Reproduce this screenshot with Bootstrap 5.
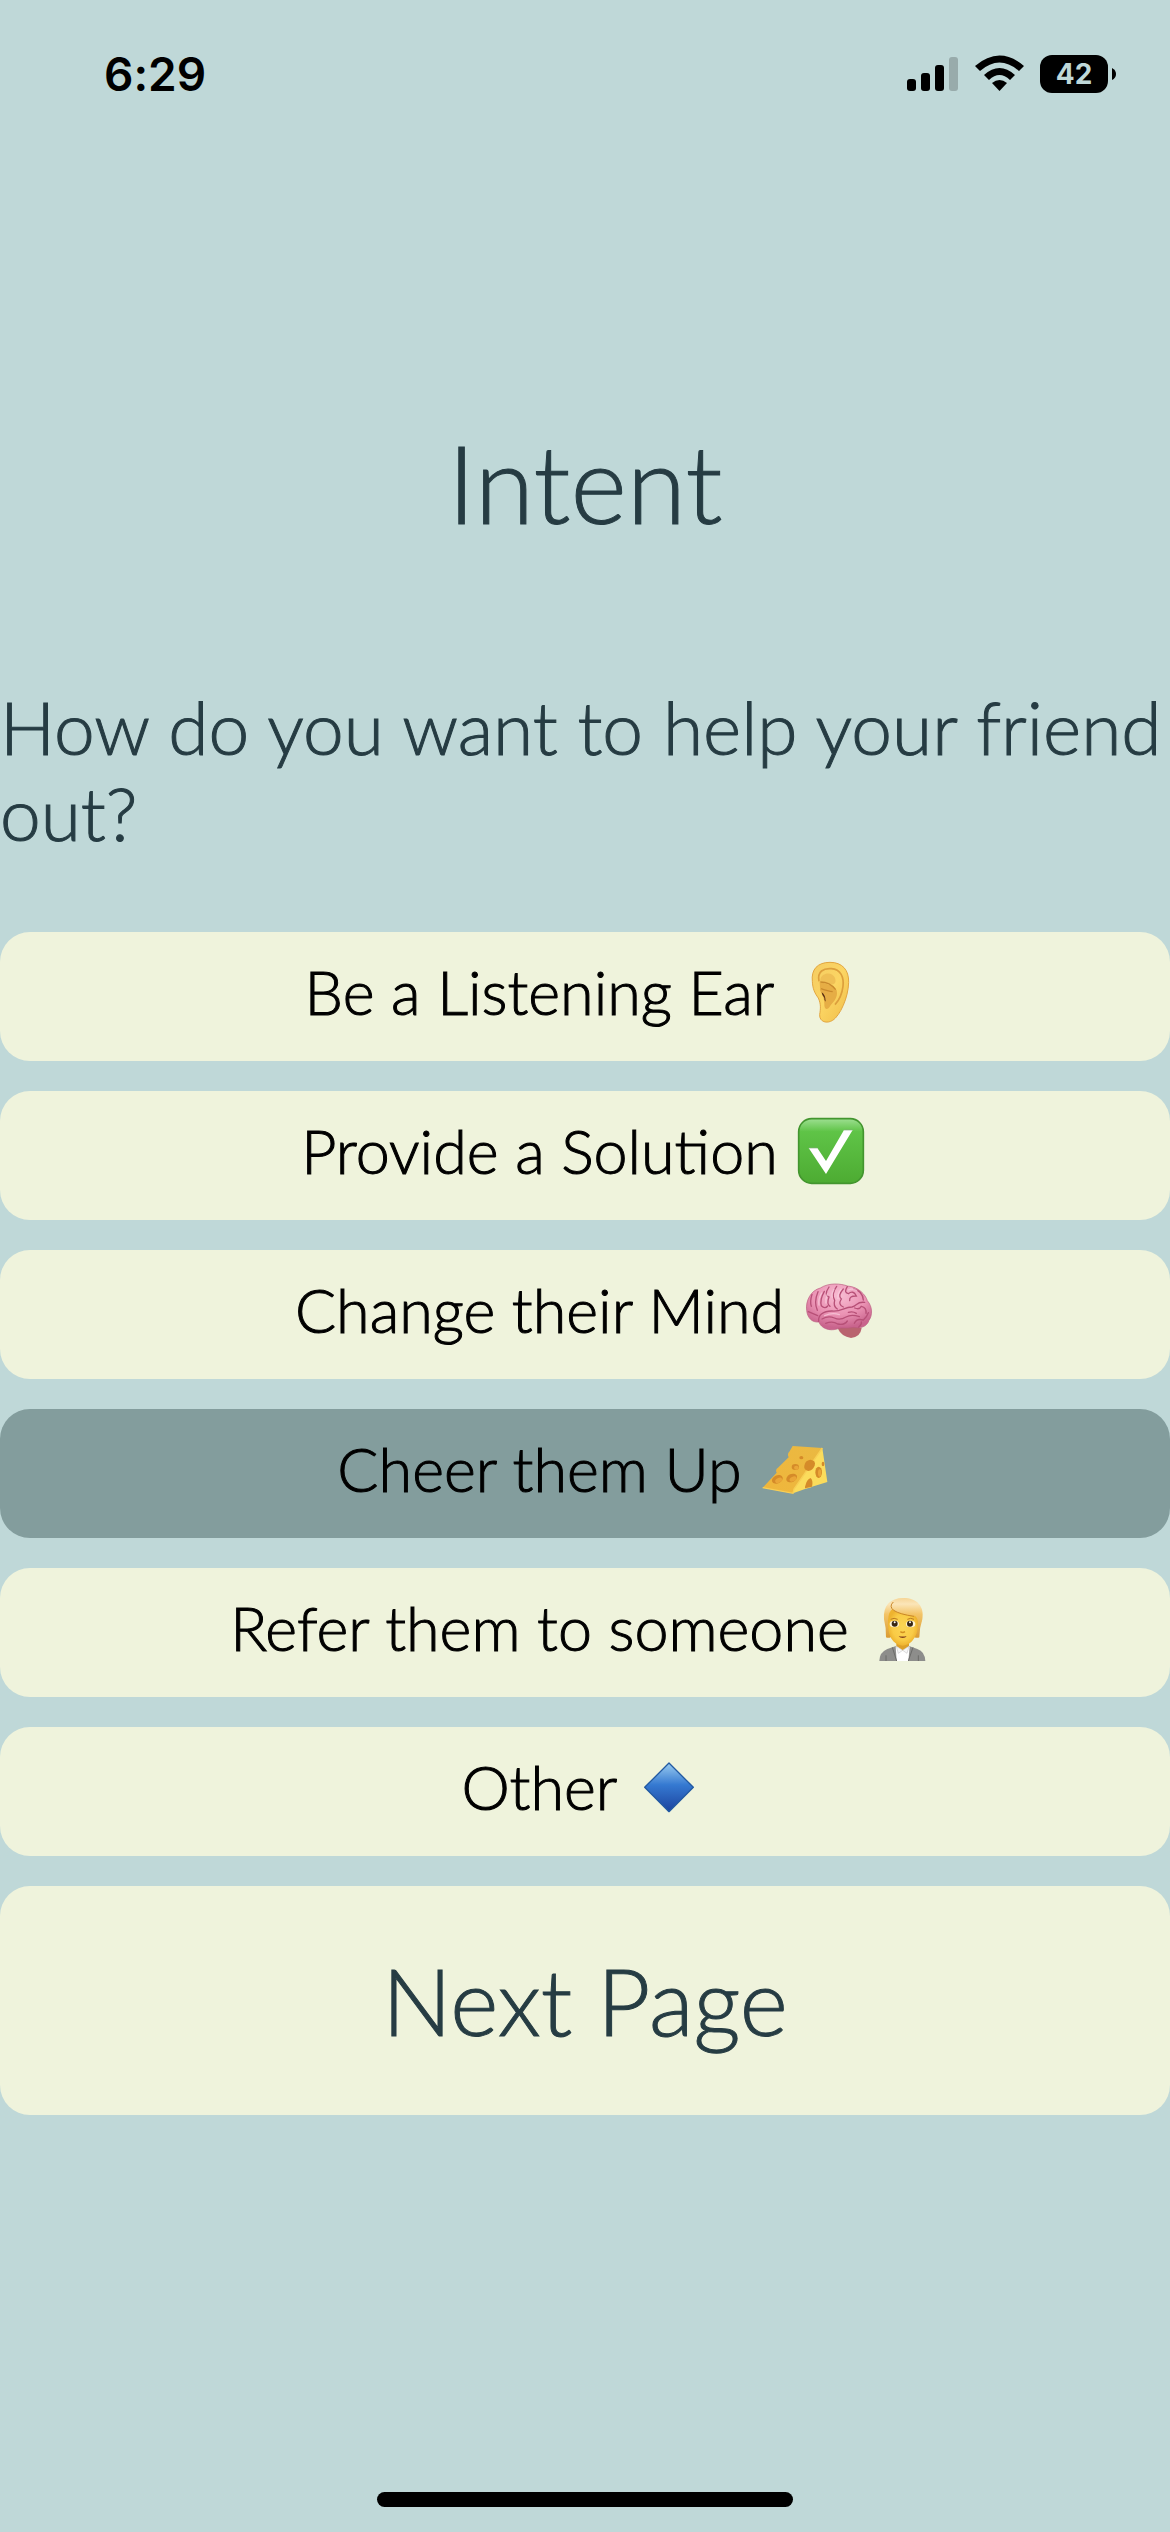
<!DOCTYPE html>
<html lang="en">
<head>
<meta charset="utf-8">
<meta name="viewport" content="width=device-width, initial-scale=1">
<title>Intent</title>
<link href="https://cdn.jsdelivr.net/npm/bootstrap@5.3.0/dist/css/bootstrap.min.css" rel="stylesheet">
<style>
body { background: #bfd8d8; color: #263c43; font-family: Lato, "Open Sans", sans-serif; font-weight: 300; font-variant-ligatures: none; }
main { -webkit-text-stroke: 1px currentColor; }
.status-bar { height: 148px; padding: 0 54px 0 104px; font-family: Inter, sans-serif; color: #000; }
.clock { font-size: 46px; line-height: 56px; font-weight: 600; }
.battery { width: 68px; height: 38px; border-radius: 12px; background: #000; color: #bfd8d8; font-size: 28px; line-height: 38px; font-weight: 700; }
.screen-title { font-size: 108px; line-height: 126px; font-weight: 300; margin: 271px 0 139px; }
.question { font-size: 73px; line-height: 86px; font-weight: 300; margin-bottom: 76px; }
.choices { gap: 30px; }
.choice, .choice:hover { background: #eff3dc; color: #000; border: 0; border-radius: 30px; padding: 22px 0 32px; font-size: 61px; line-height: 75px; font-weight: 300; gap: 16px; }
.choice.active { background: #839d9d; color: #000; }
.emoji { width: 75px; height: 75px; flex: none; }
.next, .next:hover { background: #eff3dc; color: #263c43; border: 0; border-radius: 30px; padding: 60px 0; font-size: 92px; line-height: 109px; font-weight: 300; }
.home-bar { width: 416px; height: 15px; border-radius: 8px; background: #000; margin-bottom: 25px; }
</style>
</head>
<body>
<div class="d-flex flex-column min-vh-100">
  <header class="status-bar d-flex justify-content-between align-items-center">
    <span class="clock">6:29</span>
    <div class="d-flex align-items-center">
      <svg width="52" height="38" viewBox="0 0 52 38" aria-hidden="true"><rect y="24" width="9" height="12" rx="3"/><rect x="14" y="18" width="9" height="18" rx="3"/><rect x="28" y="10" width="9" height="26" rx="3"/><rect x="42" y="2" width="9" height="34" rx="3" fill="#98abab"/></svg>
      <svg class="mx-3" width="49" height="38" viewBox="0 0 49 38" aria-hidden="true"><path d="M0 11Q24.500-10 49 11L44 16Q24.500-1 5 16Z"/><path d="M9 20Q24.500 6 40 20L35 25Q24.500 15 14 25Z"/><path d="M17 28Q24.500 22 32 28L24.500 36Z"/></svg>
      <span class="battery text-center">42</span>
      <svg class="ms-1" width="4" height="12" viewBox="0 0 4 12" aria-hidden="true"><path d="M0 0Q4 2 4 6Q4 10 0 12Z"/></svg>
    </div>
  </header>

  <main>
    <h1 class="screen-title text-center">Intent</h1>
    <p class="question">How do you want to help your friend out?</p>
    <div class="choices d-flex flex-column">
      <button type="button" class="choice btn d-flex justify-content-center">Be a Listening Ear
        <svg class="emoji" viewBox="21 42 225 225" aria-hidden="true">
          <defs><linearGradient id="earSkin" x2="1" y2="1"><stop offset="0" stop-color="#f5cc62"/><stop offset=".5" stop-color="#fbd563"/><stop offset="1" stop-color="#f0bd49"/></linearGradient></defs>
          <path d="M88 124C84 88 104 67 141 67C178 67 198 90 197 127C196 173 171 227 149 241C132 252 109 246 110 224C113 205 114 192 106 174C94 158 89 145 88 124Z" fill="url(#earSkin)" stroke="#e2a640" stroke-width="3"/>
          <path d="M108 124C102 94 122 84 145 86C174 88 183 112 180 139C177 163 168 181 156 194" fill="none" stroke="#dc9f3c" stroke-width="5"/>
          <path d="M110 125C127 132 151 133 161 151C167 177 147 187 139 202C132 211 123 207 124 191C124 166 108 154 111 145Z" fill="#e6ad45"/>
          <path d="M112 119C115 97 147 94 155 112C162 128 154 137 142 132Q128 126 110 128Z" fill="#efbf55"/>
          <path d="M112 126Q141 126 158 149M114 146Q136 154 149 155" fill="none" stroke="#c98a2e" stroke-width="4"/>
          <path d="M116 157Q128 165 128 185Q123 183 124 173Q117 167 116 157Z" fill="#552b12"/>
        </svg>
      </button>
      <button type="button" class="choice btn d-flex justify-content-center">Provide a Solution
        <svg class="emoji" viewBox="21 39 225 225" aria-hidden="true">
          <defs><linearGradient id="tick" x2="0" y2="1"><stop offset="0" stop-color="#9ddf91"/><stop offset=".2" stop-color="#5fc447"/><stop offset="1" stop-color="#4dab32"/></linearGradient></defs>
          <rect x="35" y="56" width="194" height="194" rx="39" fill="url(#tick)" stroke="#43952f" stroke-width="5"/>
          <path d="M65 144H91L117 183L171 90H197L117 222Z" fill="#fff"/>
          <path d="M65 144H91M171 90H197" stroke="#7fa979" stroke-width="2"/>
        </svg>
      </button>
      <button type="button" class="choice btn d-flex justify-content-center">Change their Mind
        <svg class="emoji" viewBox="21 36 225 225" aria-hidden="true">
          <defs><radialGradient id="lobe" cx=".5" cy=".25" r=".7"><stop offset="0" stop-color="#f8bdd3"/><stop offset=".6" stop-color="#ea92b3"/><stop offset="1" stop-color="#c9648d"/></radialGradient></defs>
          <path d="M134 205Q172 190 206 204Q202 232 174 234Q145 230 134 205Z" fill="#b9636f"/>
          <path d="M41 151C37 122 54 91 82 84C108 67 145 71 163 78C197 80 218 105 223 122C239 140 239 166 228 181C221 202 200 206 182 202C159 207 143 201 132 207C109 214 84 205 78 186C57 188 43 174 41 151Z" fill="url(#lobe)" stroke="#b9597e" stroke-width="2"/>
          <g fill="none" stroke="#b75077" stroke-width="4" stroke-linecap="round">
            <path d="M77 184C75 164 91 154 116 153C143 157 153 141 177 141C194 137 190 124 215 127"/>
            <path d="M46 155Q60 161 74 167M57 103Q50 126 55 139M75 95Q62 126 73 151M94 94Q80 119 85 137Q96 148 104 138M108 81Q92 105 108 111Q100 132 111 139M131 79Q114 102 125 121Q120 139 133 147M151 87Q133 107 145 117Q134 134 151 141M163 80Q151 98 166 101Q181 89 190 108Q168 107 170 122M182 87Q209 93 211 120M87 177Q106 166 124 174Q141 182 159 171Q175 162 199 170M98 190Q119 182 134 192Q153 197 163 183M185 144Q200 150 205 139Q221 142 219 160M184 190Q191 174 211 180Q222 170 226 158M197 201Q207 194 205 186M166 157Q180 153 190 160"/>
          </g>
          <g fill="none" stroke="#fad0df" stroke-width="4" stroke-linecap="round" opacity=".7"><path d="M86 99Q75 116 78 135M103 102Q97 118 99 129M123 88Q115 103 118 112M144 88Q133 102 135 116M95 167Q118 157 139 164M166 90Q178 83 191 92"/></g>
        </svg>
      </button>
      <button type="button" class="choice active btn d-flex justify-content-center" aria-pressed="true">Cheer them Up
        <svg class="emoji" viewBox="24 33 225 225" aria-hidden="true">
          <defs><linearGradient id="rind" x1="1" x2="0" y2="1"><stop offset="0" stop-color="#eab942"/><stop offset="1" stop-color="#f0b63b"/></linearGradient></defs>
          <path d="M128 78L217 84L129 220L38 203L80 158Q75 149 84 143L116 112Q111 101 118 95Z" fill="url(#rind)"/>
          <path d="M217 84L232 186L186 200Q184 202 165 207L129 220L132 207Z" fill="#fbdc5c"/>
          <path d="M217 84L132 207L129 220L38 203" fill="none" stroke="#f8cf55" stroke-width="4"/>
          <g fill="#d58b29"><ellipse cx="82" cy="178" rx="17" ry="12" transform="rotate(-25 82 178)"/><ellipse cx="125" cy="174" rx="17" ry="12" transform="rotate(-25 125 174)"/><ellipse cx="136" cy="141" rx="11" ry="9"/><ellipse cx="154" cy="113" rx="6" ry="5"/><path d="M163 137Q165 121 181 119Q199 121 194 137Q188 151 175 153Q160 149 163 137Z"/><ellipse cx="206" cy="157" rx="10" ry="17"/><ellipse cx="219" cy="132" rx="4" ry="7"/><path d="M165 200Q170 178 182 174Q190 182 186 200L165 205Z"/></g>
          <g fill="#eaa638"><ellipse cx="86" cy="181" rx="11" ry="7" transform="rotate(-25 86 181)"/><ellipse cx="129" cy="177" rx="11" ry="7" transform="rotate(-25 129 177)"/><ellipse cx="139" cy="143" rx="7" ry="6"/><ellipse cx="209" cy="159" rx="5" ry="11"/></g>
        </svg>
      </button>
      <button type="button" class="choice btn d-flex justify-content-center">Refer them to someone
        <svg class="emoji" viewBox="21 30 225 225" aria-hidden="true">
          <defs><radialGradient id="face"><stop offset="0" stop-color="#fcd654"/><stop offset=".7" stop-color="#f9cb46"/><stop offset="1" stop-color="#eeb32f"/></radialGradient><linearGradient id="hair" gradientUnits="userSpaceOnUse" x1="0" y1="54" x2="0" y2="175"><stop offset="0" stop-color="#f6d596"/><stop offset=".15" stop-color="#fbe5b8"/><stop offset=".4" stop-color="#f3c468"/><stop offset="1" stop-color="#d99a31"/></linearGradient></defs>
          <path d="M64 243Q65 216 88 207L112 199H155L178 207Q201 215 202 243Z" fill="#8d8d8b"/>
          <path d="M113 200H155L151 243H116Z" fill="#fff"/>
          <path d="M103 202L116 243M165 202L151 243M84 226V243M181 226V243" stroke="#6b6b69" stroke-width="3"/>
          <path d="M115 180H153V199L134 212L115 199Z" fill="#dda028"/>
          <path d="M115 199L134 211L121 220ZM153 199L134 211L147 220Z" fill="#f7f7f7" stroke="#ccc" stroke-width="2"/>
          <path d="M84 172Q85 145 78 118C75 77 96 54 136 54C176 54 200 78 193 118Q184 145 184 172Q176 176 168 170H100Q92 176 84 172Z" fill="url(#hair)"/>
          <path d="M90 122Q91 92 106 86Q128 103 170 107Q179 112 180 126Q182 162 162 184Q134 210 106 184Q88 163 90 122Z" fill="url(#face)"/>
          <path d="M99 68Q99 94 125 99Q151 103 169 109Q160 99 165 93Q184 103 191 126Q197 81 166 63Q130 47 99 68Z" fill="url(#hair)"/>
          <path d="M106 66Q92 79 107 91Q125 103 168 109" fill="none" stroke="#c98628" stroke-width="3"/>
          <path d="M98 118Q108 112 119 118M148 118Q158 112 168 118" fill="none" stroke="#bb7920" stroke-width="3"/>
          <ellipse cx="109" cy="132" rx="14" ry="10" fill="#fff5d6"/><ellipse cx="158" cy="132" rx="14" ry="10" fill="#fff5d6"/>
          <circle cx="110" cy="131" r="9" fill="#382713"/><circle cx="156" cy="131" r="9" fill="#382713"/><circle cx="110" cy="127" r="3" fill="#fff"/><circle cx="156" cy="127" r="3" fill="#fff"/>
          <path d="M127 155Q134 160 141 155" fill="none" stroke="#d38f20" stroke-width="4"/><path d="M122 168Q134 171 146 168Q143 174 134 174Q125 174 122 168Z" fill="#82401e"/>
        </svg>
      </button>
      <button type="button" class="choice btn d-flex justify-content-center">Other
        <svg class="emoji" viewBox="36 27 225 225" aria-hidden="true">
          <defs><linearGradient id="gem" x2="0" y2="1"><stop offset="0" stop-color="#9accf0"/><stop offset=".45" stop-color="#3579d1"/><stop offset="1" stop-color="#1c439e"/></linearGradient></defs>
          <path d="M144 69L217 142L144 215L71 142Z" fill="url(#gem)" stroke="#2159a2" stroke-width="4" stroke-linejoin="round"/>
        </svg>
      </button>
      <button type="button" class="next btn">Next Page</button>
    </div>
  </main>
  <div class="home-bar mx-auto mt-auto"></div>
</div>
<script src="https://cdn.jsdelivr.net/npm/bootstrap@5.3.0/dist/js/bootstrap.bundle.min.js"></script>
</body>
</html>
